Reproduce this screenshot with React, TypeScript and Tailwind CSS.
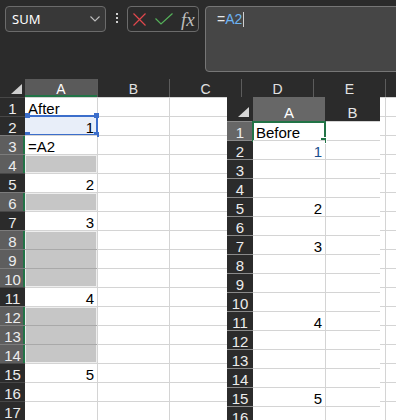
import clsx from "clsx";

type LeftRow = {
  n: number;
  text?: string;
  right?: boolean;
  grey?: boolean;
  sel?: boolean;
  ref?: boolean;
};

const leftRows: LeftRow[] = [
  { n: 1, text: "After" },
  { n: 2, text: "1", right: true, ref: true },
  { n: 3, text: "=A2", sel: true },
  { n: 4, grey: true, sel: true },
  { n: 5, text: "2", right: true },
  { n: 6, grey: true, sel: true },
  { n: 7, text: "3", right: true },
  { n: 8, grey: true, sel: true },
  { n: 9, grey: true, sel: true },
  { n: 10, grey: true, sel: true },
  { n: 11, text: "4", right: true },
  { n: 12, grey: true, sel: true },
  { n: 13, grey: true, sel: true },
  { n: 14, grey: true, sel: true },
  { n: 15, text: "5", right: true },
  { n: 16 },
  { n: 17 },
];

const rightValues: Record<number, { text: string; right?: boolean; blue?: boolean }> = {
  1: { text: "Before" },
  2: { text: "1", right: true, blue: true },
  5: { text: "2", right: true },
  7: { text: "3", right: true },
  11: { text: "4", right: true },
  15: { text: "5", right: true },
};

const GREY_EDGE: Record<string, string> = {
  none: "shadow-[inset_1px_0_0_#eeeeee,inset_-1px_0_0_#eeeeee]",
  top: "shadow-[inset_1px_0_0_#eeeeee,inset_-1px_0_0_#eeeeee,inset_0_1px_0_#eeeeee]",
  bottom: "shadow-[inset_1px_0_0_#eeeeee,inset_-1px_0_0_#eeeeee,inset_0_-1px_0_#eeeeee]",
  both: "shadow-[inset_1px_0_0_#eeeeee,inset_-1px_0_0_#eeeeee,inset_0_1px_0_#eeeeee,inset_0_-1px_0_#eeeeee]",
};

export default function App() {
  return (
    <div className="relative h-[420px] w-[396px] overflow-hidden bg-[#2b2b2b] font-['Liberation_Sans',Arial,sans-serif]">
      <Toolbar />
      <ColumnHeaders />
      <div>
        {leftRows.map((row, i) => (
          <SheetRow key={row.n} row={row} prev={leftRows[i - 1]} next={leftRows[i + 1]} />
        ))}
      </div>
      <PastedSheet />
    </div>
  );
}

function Toolbar() {
  return (
    <div className="flex h-[79px] items-start pl-[5px] pt-[6px]">
      <div className="flex h-[26px] w-[101px] shrink-0 items-center justify-between rounded-[4px] border border-[#6b6b6b] bg-[#383838] pl-[6px] pr-[5px]">
        <span className="font-['Noto_Sans',sans-serif] text-[13px] leading-none text-white">SUM</span>
        <svg width="10" height="6" viewBox="0 0 10 6" fill="none">
          <path d="M0.5 0.5 L5 5 L9.5 0.5" stroke="#bdbdbd" strokeWidth="1.1" />
        </svg>
      </div>

      <div className="flex w-[21px] shrink-0 flex-col items-center gap-[2px] pt-[7px]">
        <div className="h-[2px] w-[2px] bg-[#d0d0d0]" />
        <div className="h-[2px] w-[2px] bg-[#d0d0d0]" />
        <div className="h-[2px] w-[2px] bg-[#d0d0d0]" />
      </div>

      <div className="flex h-[26px] w-[72px] shrink-0 items-center rounded-[4px] border border-[#6b6b6b] pl-[5px]">
        <svg width="13" height="13" viewBox="0 0 13 13" fill="none">
          <path d="M0.5 0.5 L12.5 12.5 M12.5 0.5 L0.5 12.5" stroke="#e0474c" strokeWidth="1.2" />
        </svg>
        <svg className="ml-[9px]" width="18" height="12" viewBox="0 0 18 12" fill="none">
          <path d="M0.5 5.5 L6 11 L17.5 0.5" stroke="#55b15a" strokeWidth="1.2" />
        </svg>
        <span className="ml-[8px] font-['Liberation_Serif',serif] text-[19px] italic leading-none text-[#bdbdbd]">
          fx
        </span>
      </div>

      <div className="ml-[6px] -mr-[10px] flex h-[66px] flex-1 items-start rounded-[4px] border border-[#767676] bg-[#464646] pl-[11px] pt-[2px] text-[14px] leading-[20px]">
        <span className="text-[#e6e6e6]">=</span>
        <span className="text-[#6cb3f3]">A2</span>
        <span className="ml-[1px] mt-[3px] h-[15px] w-px bg-[#d0d0d0]" />
      </div>
    </div>
  );
}

function ColumnHeaders() {
  return (
    <div className="flex h-[18px] text-[14px] leading-[18px] text-[#e2e2e2]">
      <div className="flex w-[25px] shrink-0 items-end justify-end pb-[3px] pr-[3px]">
        <svg width="11" height="10" viewBox="0 0 11 10">
          <polygon points="11,0 11,10 0,10" fill="#cfcfcf" />
        </svg>
      </div>
      <div className="w-[72px] shrink-0 border-b-2 border-[#217346] bg-[#5a5a5a] pt-px text-center text-white">A</div>
      {["B", "C", "D", "E"].map((c) => (
        <div key={c} className="w-[72px] shrink-0 border-l border-[#5c5c5c] pt-px text-center">
          {c}
        </div>
      ))}
      <div className="flex-1 border-l border-[#5c5c5c]" />
    </div>
  );
}

function SheetRow({ row, prev, next }: { row: LeftRow; prev?: LeftRow; next?: LeftRow }) {
  const greyTop = row.grey && !prev?.grey;
  const greyBottom = row.grey && !next?.grey;
  const edge = greyTop && greyBottom ? "both" : greyTop ? "top" : greyBottom ? "bottom" : "none";

  return (
    <div className="flex h-[19px] text-[15px] leading-[19px]">
      <div
        className={clsx(
          "w-[25px] shrink-0 border-t pt-px text-center text-[#ececec]",
          row.sel
            ? "border-[#7c7c7c] bg-[#5e5e5e] shadow-[inset_-2px_0_0_#217346]"
            : "border-[#474747] bg-[#2b2b2b]",
        )}
      >
        {row.n}
      </div>
      <div
        className={clsx(
          "relative w-[72px] shrink-0 border-t px-[3px] pt-px text-black",
          row.right && "text-right",
          row.grey
            ? clsx("bg-[#c6c6c6]", greyTop ? "border-[#d4d4d4]" : "border-[#a9a9a9]", GREY_EDGE[edge])
            : row.ref
              ? "border-[#d4d4d4] bg-[#e8eef9]"
              : "border-[#d4d4d4] bg-white",
        )}
      >
        {row.text}
        {row.ref && <RefBox />}
      </div>
      {[0, 1, 2, 3].map((c) => (
        <div key={c} className="w-[72px] shrink-0 border-l border-t border-[#d4d4d4] bg-white" />
      ))}
      <div className="flex-1 border-l border-t border-[#d4d4d4] bg-white" />
    </div>
  );
}

function RefBox() {
  return (
    <>
      <div className="absolute left-[2px] top-[-2px] h-[21px] w-[71px] border-y-2 border-r-2 border-[#3c6ecb]" />
      <div className="absolute left-0 top-[-4px] h-[5px] w-[5px] bg-[#3c6ecb]" />
      <div className="absolute left-[69px] top-[-4px] h-[5px] w-[5px] bg-[#3c6ecb]" />
      <div className="absolute left-0 top-[15px] h-[5px] w-[5px] bg-[#3c6ecb]" />
      <div className="absolute left-[69px] top-[15px] h-[5px] w-[5px] bg-[#3c6ecb]" />
    </>
  );
}

function PastedSheet() {
  return (
    <div className="absolute left-[227px] top-[97px] w-[153px] bg-[#2b2b2b] text-[15px]">
      <div className="flex h-[24px] leading-[19px] text-[#e6e6e6]">
        <div className="flex w-[26px] shrink-0 items-end justify-end pb-[4px] pr-[4px]">
          <svg width="11" height="10" viewBox="0 0 11 10">
            <polygon points="11,0 11,10 0,10" fill="#d6d6d6" />
          </svg>
        </div>
        <div className="w-[72px] shrink-0 bg-[#676767] pt-[6px] text-center text-white">A</div>
        <div className="flex-1 pt-[6px] text-center">B</div>
      </div>
      {Array.from({ length: 16 }, (_, i) => i + 1).map((n) => {
        const v = rightValues[n];
        return (
          <div key={n} className="flex h-[19px] leading-[19px]">
            <div
              className={clsx(
                "w-[26px] shrink-0 border-t border-[#8a8a8a] pt-px text-center text-[#ececec]",
                n === 1 ? "bg-[#676767]" : "bg-[#2b2b2b]",
              )}
            >
              {n}
            </div>
            <div
              className={clsx(
                "relative w-[72px] shrink-0 border-t border-[#d4d4d4] bg-white px-[3px] pt-px",
                v?.right && "text-right",
                v?.blue ? "text-[#1a4f8f]" : "text-black",
              )}
            >
              {v?.text}
              {n === 1 && (
                <>
                  <div className="absolute left-[-1px] top-[-1px] h-[21px] w-[74px] border-2 border-[#217346]" />
                  <div className="absolute left-[67px] top-[15px] h-[7px] w-[7px] border border-white bg-[#217346]" />
                </>
              )}
            </div>
            <div className="flex-1 border-l border-t border-[#d4d4d4] bg-white" />
          </div>
        );
      })}
    </div>
  );
}
